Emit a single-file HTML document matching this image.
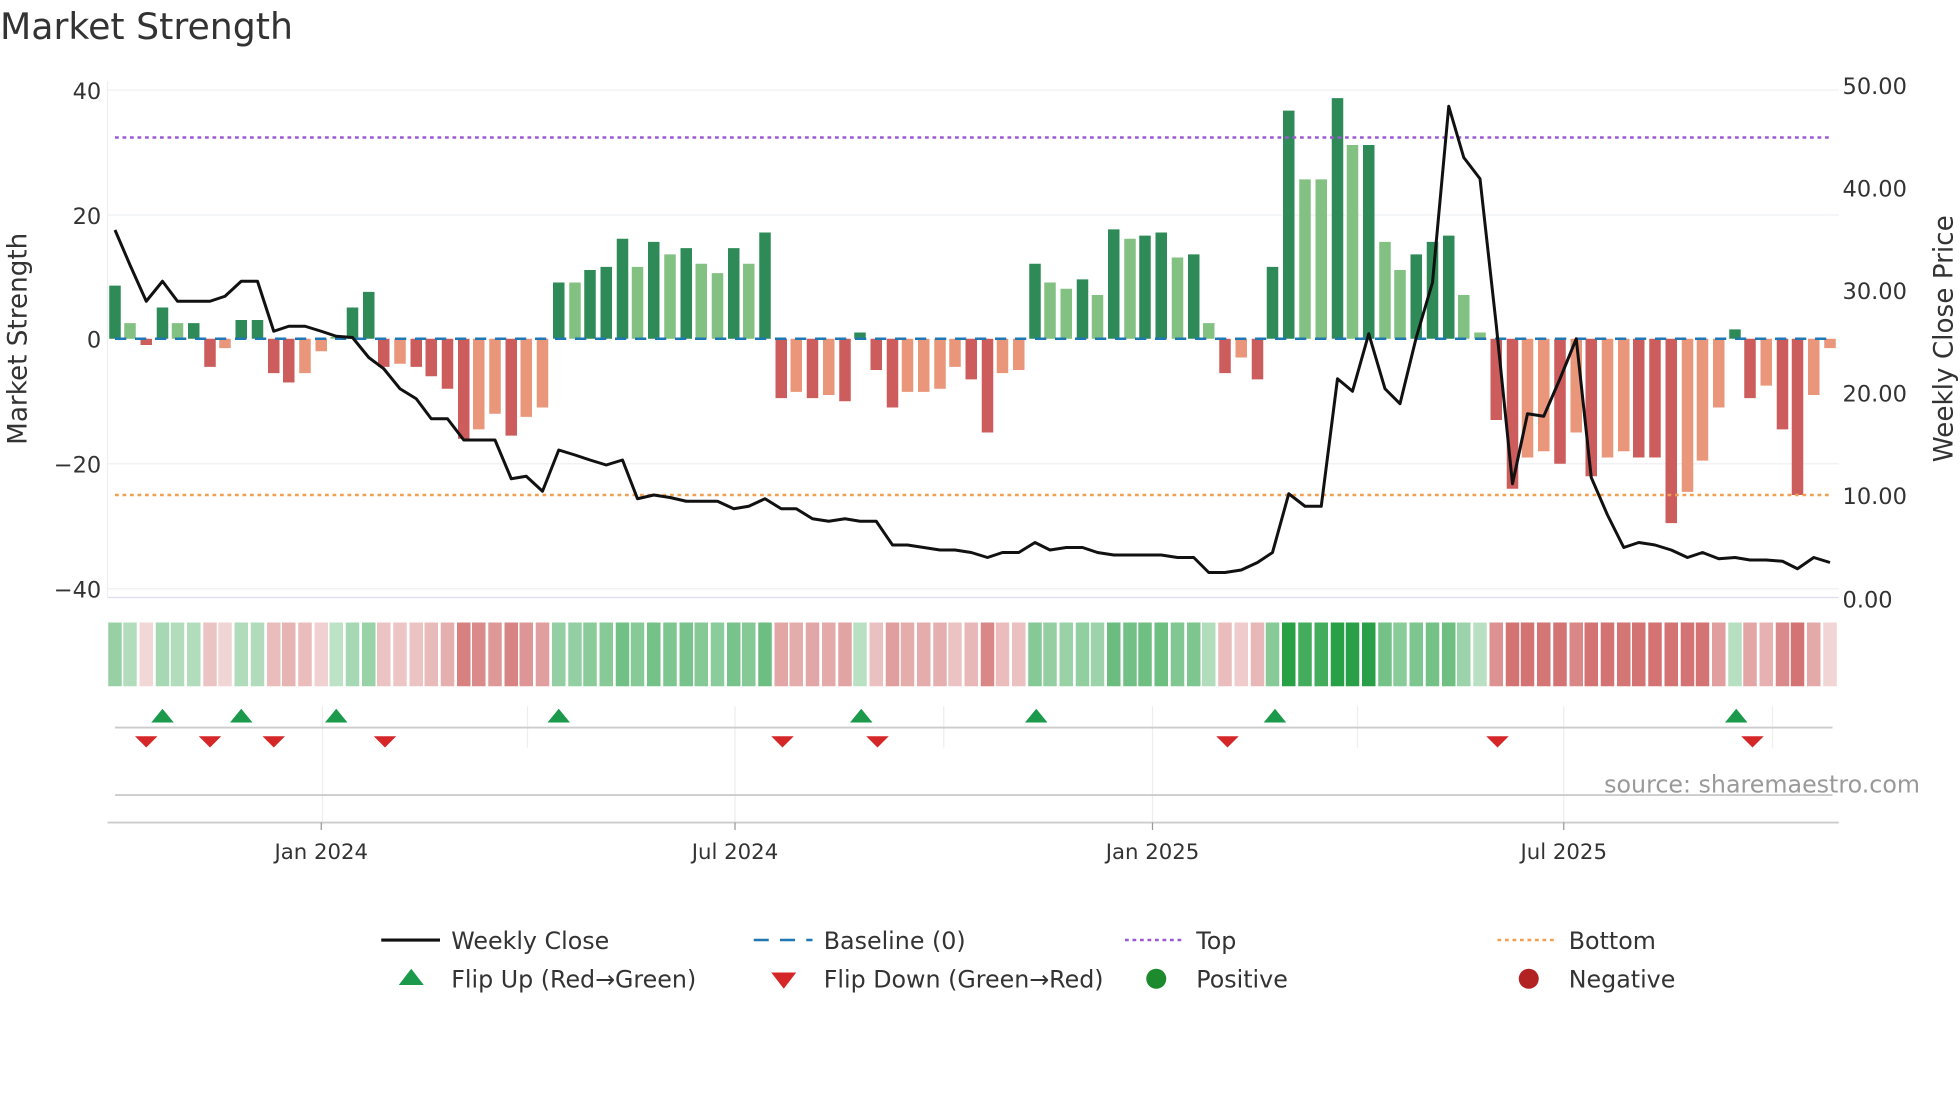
<!DOCTYPE html>
<html><head><meta charset="utf-8"><style>
html,body{margin:0;padding:0;background:#fff;}
svg{display:block;font-family:"DejaVu Sans","Liberation Sans",sans-serif;}
</style></head><body>
<svg id="s" width="1960" height="1102" viewBox="0 0 1568 881.6" xmlns="http://www.w3.org/2000/svg">
<rect width="1568" height="882" fill="#fff"/>
<text x="0" y="31" font-size="29" fill="#333">Market Strength</text>
<g stroke="#eef0f3" stroke-width="1">
<line x1="86" x2="1471" y1="72" y2="72"/><line x1="86" x2="1471" y1="172" y2="172"/>
<line x1="86" x2="1471" y1="371" y2="371"/><line x1="86" x2="1471" y1="471" y2="471"/>
</g>
<line x1="86" x2="1471" y1="478" y2="478" stroke="#dde" stroke-width="1"/>
<line x1="86" x2="86" y1="65" y2="478" stroke="#eee"/>
<g font-size="18" fill="#333" text-anchor="end">
<text x="81" y="79">40</text><text x="81" y="179">20</text><text x="81" y="278">0</text>
<text x="81" y="378">−20</text><text x="81" y="478">−40</text>
</g>
<g font-size="18" fill="#333">
<text x="1474" y="75">50.00</text><text x="1474" y="157">40.00</text><text x="1474" y="239">30.00</text>
<text x="1474" y="321">20.00</text><text x="1474" y="403">10.00</text><text x="1474" y="486">0.00</text>
</g>
<text transform="translate(21,271) rotate(-90)" font-size="21" fill="#333" text-anchor="middle">Market Strength</text>
<text transform="translate(1562,271) rotate(-90)" font-size="21" fill="#333" text-anchor="middle">Weekly Close Price</text>
<g id="bars"></g>
<line x1="92" x2="1466" y1="271" y2="271" stroke="#1f77b4" stroke-width="2" stroke-dasharray="9,7"/>
<line x1="92" x2="1466" y1="110" y2="110" stroke="#9b59d6" stroke-width="2" stroke-dasharray="3,3"/>
<line x1="92" x2="1466" y1="396" y2="396" stroke="#f0a050" stroke-width="2" stroke-dasharray="3,3"/>
<polyline id="pl" fill="none" stroke="#111" stroke-width="2.4" stroke-linejoin="round"/>
<g id="heat"></g>
<g stroke="#eee" stroke-width="1">
<line x1="258" x2="258" y1="565" y2="660"/><line x1="422" x2="422" y1="565" y2="598"/>
<line x1="588" x2="588" y1="565" y2="660"/><line x1="755" x2="755" y1="565" y2="598"/>
<line x1="922" x2="922" y1="565" y2="660"/><line x1="1086" x2="1086" y1="565" y2="598"/>
<line x1="1251" x2="1251" y1="565" y2="660"/><line x1="1418" x2="1418" y1="565" y2="598"/>
</g>
<line x1="92" x2="1466" y1="582" y2="582" stroke="#ccc" stroke-width="1.5"/>
<line x1="92" x2="1466" y1="636" y2="636" stroke="#ccc" stroke-width="1.5"/>
<g id="mk"></g>
<line x1="86" x2="1471" y1="658" y2="658" stroke="#ccc" stroke-width="1.5"/>
<g stroke="#999"><line x1="257" x2="257" y1="658" y2="664"/><line x1="588" x2="588" y1="658" y2="664"/><line x1="922" x2="922" y1="658" y2="664"/><line x1="1251" x2="1251" y1="658" y2="664"/></g>
<g font-size="17" fill="#333" text-anchor="middle">
<text x="257" y="687">Jan 2024</text><text x="588" y="687">Jul 2024</text><text x="922" y="687">Jan 2025</text><text x="1251" y="687">Jul 2025</text>
</g>
<text x="1536" y="634" font-size="19" fill="#999" text-anchor="end">source: sharemaestro.com</text>
<g font-size="19" fill="#333">
<line x1="305" x2="352" y1="752" y2="752" stroke="#111" stroke-width="2.5"/><text x="361" y="759">Weekly Close</text>
<line x1="603" x2="650" y1="752" y2="752" stroke="#1f77b4" stroke-width="2" stroke-dasharray="12,9"/><text x="659" y="759">Baseline (0)</text>
<line x1="900" x2="947" y1="752" y2="752" stroke="#9b59d6" stroke-width="2" stroke-dasharray="3,3"/><text x="957" y="759">Top</text>
<line x1="1198" x2="1245" y1="752" y2="752" stroke="#f0a050" stroke-width="2" stroke-dasharray="3,3"/><text x="1255" y="759">Bottom</text>
<polygon points="319,788 339,788 329,775" fill="#1a9a4a"/><text x="361" y="790">Flip Up (Red→Green)</text>
<polygon points="617,778 637,778 627,791" fill="#d62728"/><text x="659" y="790">Flip Down (Green→Red)</text>
<circle cx="925" cy="783" r="8" fill="#1e8a2e"/><text x="957" y="790">Positive</text>
<circle cx="1223" cy="783" r="8" fill="#b22222"/><text x="1255" y="790">Negative</text>
</g>
</svg>
<script>
var D=[
[92,8.5,1,184],[104,2.5,0,212],[117,-1,1,241],[130,5,1,225],[142,2.5,0,241],[155,2.5,1,241],[168,-4.5,1,241],[180,-1.5,0,237],[193,3,1,225],[206,3,1,225],
[219,-5.5,1,265],[231,-7,1,261],[244,-5.5,0,261],[257,-2,0,265],[269,0.3,0,269],[282,5,1,270],[295,7.5,1,286],[307,-4.5,1,295],[320,-4,0,311],[333,-4.5,1,319],
[345,-6,1,335],[358,-8,1,335],[371,-16,1,352],[383,-14.5,0,352],[396,-12,0,352],[409,-15.5,1,383],[421,-12.5,0,381],[434,-11,0,393],[447,9,1,360],[460,9,0,364],
[472,11,1,368],[485,11.5,1,372],[498,16,1,368],[510,11.5,0,399],[523,15.5,1,396],[536,13.5,0,398],[549,14.5,1,401],[561,12,0,401],[574,10.5,0,401],[587,14.5,1,407],
[599,12,0,405],[612,17,1,399],[625,-9.5,1,407],[637,-8.5,0,407],[650,-9.5,1,415],[663,-9,0,417],[676,-10,1,415],[688,1,1,417],[701,-5,1,417],[714,-11,1,436],
[726,-8.5,0,436],[739,-8.5,0,438],[752,-8,0,440],[764,-4.5,0,440],[777,-6.5,1,442],[790,-15,1,446],[802,-5.5,0,442],[815,-5,0,442],[828,12,1,434],[840,9,0,440],
[853,8,0,438],[866,9.5,1,438],[878,7,0,442],[891,17.5,1,444],[904,16,0,444],[916,16.5,1,444],[929,17,1,444],[942,13,0,446],[955,13.5,1,446],[967,2.5,0,458],
[980,-5.5,1,458],[993,-3,0,456],[1006,-6.5,1,450],[1018,11.5,1,442],[1031,36.5,1,395],[1044,25.5,0,405],[1057,25.5,0,405],[1070,38.5,1,303],[1082,31,0,313],[1095,31,1,267],
[1108,15.5,0,311],[1120,11,0,323],[1133,13.5,1,270],[1146,15.5,1,226],[1159,16.5,1,85],[1171,7,0,126],[1184,1,0,143],[1197,-13,1,260],[1210,-24,1,387],[1222,-19,0,331],
[1235,-18,0,333],[1248,-20,1,303],[1261,-15,0,271],[1273,-22,1,382],[1286,-19,0,412],[1299,-18,0,438],[1311,-19,1,434],[1324,-19,1,436],[1337,-29.5,1,440],[1350,-24.5,0,446],
[1362,-19.5,0,442],[1375,-11,0,447],[1388,1.5,1,446],[1400,-9.5,1,448],[1413,-7.5,0,448],[1426,-14.5,1,449],[1438,-25,1,455],[1451,-9,0,446],[1464,-1.5,0,450]];
var NS="http://www.w3.org/2000/svg";
function el(t,a,p){var e=document.createElementNS(NS,t);for(var k in a)e.setAttribute(k,a[k]);document.getElementById(p).appendChild(e);}
var pts=[];
D.forEach(function(d){var x=d[0],val=d[1],y=271-val*5;
 var c=val>=0?(d[2]?'#2e8b57':'#82c182'):(d[2]?'#cd5c5c':'#e9967a');
 el('rect',{x:x-4.6,y:Math.min(y,271),width:9.2,height:Math.max(Math.abs(val*5),0.8),fill:c},'bars');
 var m=Math.min(Math.abs(val)/40,1),hc;
 if(val>=0){hc='rgba(40,160,70,'+Math.min(0.3+m*0.9,1)+')';}
 else{hc='rgba(200,80,80,'+Math.min(0.2+m*1.3,0.8)+')';}
 el('rect',{x:x-5.4,y:498,width:10.8,height:51,fill:hc},'heat');
 pts.push(x+','+d[3]);});
document.getElementById('pl').setAttribute('points',pts.join(' '));
[130,193,269,447,689,829,1020,1389].forEach(function(x){el('polygon',{points:(x-9)+',578 '+(x+9)+',578 '+x+',567',fill:'#1a9a4a'},'mk');});
[117,168,219,308,626,702,982,1198,1402].forEach(function(x){el('polygon',{points:(x-9)+',589 '+(x+9)+',589 '+x+',598',fill:'#d62728'},'mk');});
</script>
</body></html>
